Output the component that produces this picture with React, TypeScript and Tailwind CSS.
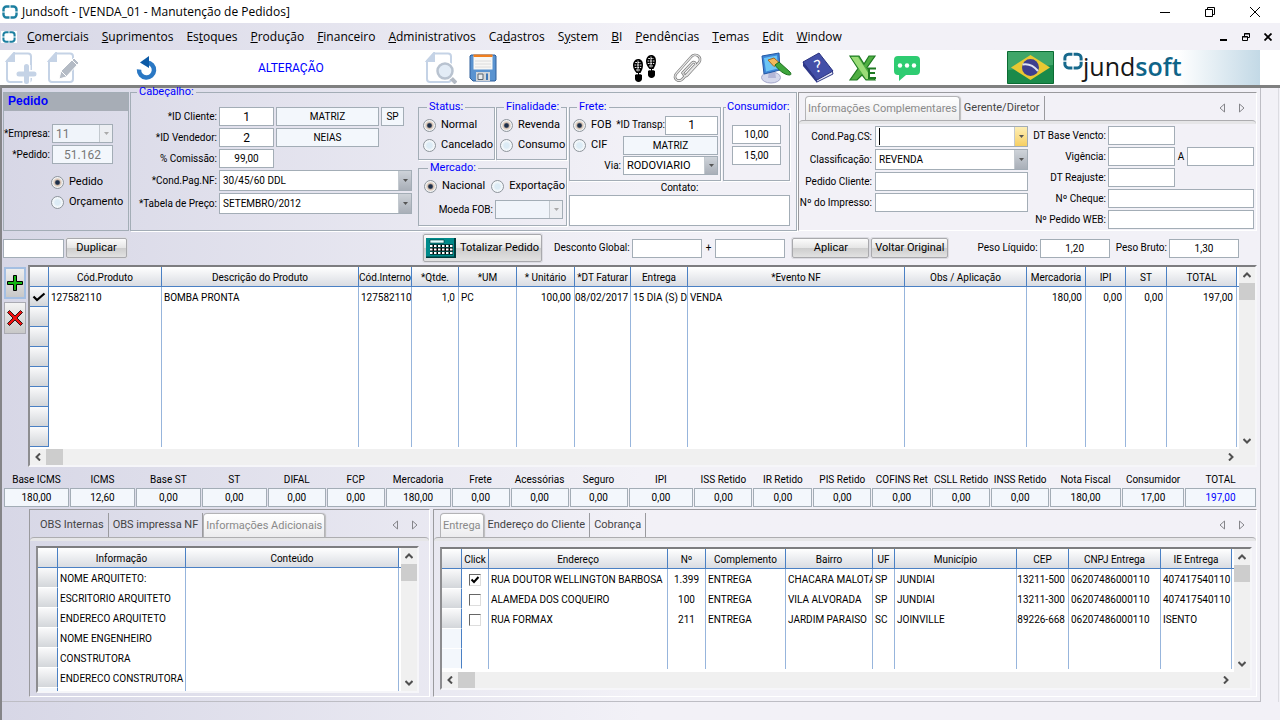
import type { ReactNode } from 'react';
import clsx from 'clsx';

const BORDER = 'border border-[#a3adb6]';

const menus = [
  ['', 'C', 'omerciais'],
  ['', 'S', 'uprimentos'],
  ['Es', 't', 'oques'],
  ['', 'P', 'rodução'],
  ['', 'F', 'inanceiro'],
  ['', 'A', 'dministrativos'],
  ['Ca', 'd', 'astros'],
  ['S', 'y', 'stem'],
  ['', 'B', 'I'],
  ['', 'P', 'endências'],
  ['', 'T', 'emas'],
  ['', 'E', 'dit'],
  ['', 'W', 'indow'],
];

const totals = [
  ['Base ICMS', '180,00'],
  ['ICMS', '12,60'],
  ['Base ST', '0,00'],
  ['ST', '0,00'],
  ['DIFAL', '0,00'],
  ['FCP', '0,00'],
  ['Mercadoria', '180,00'],
  ['Frete', '0,00'],
  ['Acessórias', '0,00'],
  ['Seguro', '0,00'],
  ['IPI', '0,00'],
  ['ISS Retido', '0,00'],
  ['IR Retido', '0,00'],
  ['PIS Retido', '0,00'],
  ['COFINS Ret', '0,00'],
  ['CSLL Retido', '0,00'],
  ['INSS Retido', '0,00'],
  ['Nota Fiscal', '180,00'],
  ['Consumidor', '17,00'],
  ['TOTAL', '197,00'],
];

type Column = { title: string; width?: string; align?: string };

const productColumns: Column[] = [
  { title: 'Cód.Produto', width: 'w-[113px]' },
  { title: 'Descrição do Produto', width: 'w-[197px]' },
  { title: 'Cód.Interno', width: 'w-[53px]' },
  { title: '*Qtde.', width: 'w-[47px]', align: 'text-right' },
  { title: '*UM', width: 'w-[58px]' },
  { title: '* Unitário', width: 'w-[58px]', align: 'text-right' },
  { title: '*DT Faturar', width: 'w-[56px]', align: 'text-right' },
  { title: 'Entrega', width: 'w-[57px]' },
  { title: '*Evento NF' },
  { title: 'Obs / Aplicação', width: 'w-[122px]' },
  { title: 'Mercadoria', width: 'w-[59px]', align: 'text-right' },
  { title: 'IPI', width: 'w-[40px]', align: 'text-right' },
  { title: 'ST', width: 'w-[41px]', align: 'text-right' },
  { title: 'TOTAL', width: 'w-[70px]', align: 'text-right' },
];

const productRows: ReactNode[][] = [
  ['127582110', 'BOMBA PRONTA', '127582110', '1,0', 'PC', '100,00', '08/02/2017', '15 DIA (S) D', 'VENDA', '', '180,00', '0,00', '0,00', '197,00'],
];

const infoColumns: Column[] = [{ title: 'Informação', width: 'w-[128px]' }, { title: 'Conteúdo' }];

const infoRows: ReactNode[][] = [
  ['NOME ARQUITETO:', ''],
  ['ESCRITORIO ARQUITETO', ''],
  ['ENDERECO ARQUITETO', ''],
  ['NOME ENGENHEIRO', ''],
  ['CONSTRUTORA', ''],
  ['ENDERECO CONSTRUTORA', ''],
];

const addressColumns: Column[] = [
  { title: 'Click', width: 'w-[27px]', align: 'text-center' },
  { title: 'Endereço', width: 'w-[179px]' },
  { title: 'Nº', width: 'w-[38px]', align: 'text-center' },
  { title: 'Complemento', width: 'w-[80px]' },
  { title: 'Bairro', width: 'w-[87px]' },
  { title: 'UF', width: 'w-[22px]' },
  { title: 'Município' },
  { title: 'CEP', width: 'w-[52px]', align: 'text-right' },
  { title: 'CNPJ Entrega', width: 'w-[92px]' },
  { title: 'IE Entrega', width: 'w-[71px]' },
];

const addressRows: ReactNode[][] = [
  [<Tick key="t" label="RUA DOUTOR WELLINGTON BARBOSA" checked />, 'RUA DOUTOR WELLINGTON BARBOSA', '1.399', 'ENTREGA', 'CHACARA MALOTA', 'SP', 'JUNDIAI', '13211-500', '06207486000110', '407417540110'],
  [<Tick key="t" label="ALAMEDA DOS COQUEIRO" />, 'ALAMEDA DOS COQUEIRO', '100', 'ENTREGA', 'VILA ALVORADA', 'SP', 'JUNDIAI', '13211-300', '06207486000110', '407417540110'],
  [<Tick key="t" label="RUA FORMAX" />, 'RUA FORMAX', '211', 'ENTREGA', 'JARDIM PARAISO', 'SC', 'JOINVILLE', '89226-668', '06207486000110', 'ISENTO'],
];

function Tick({ label, checked }: { label: string; checked?: boolean }) {
  return (
    <span className="relative inline-block size-3 align-middle">
      <input
        type="checkbox"
        aria-label={label}
        defaultChecked={checked}
        className="peer block size-3 appearance-none border border-t-[#666] border-l-[#666] border-r-[#ddd] border-b-[#ddd] bg-white"
      />
      <svg viewBox="0 0 12 12" className="pointer-events-none absolute inset-0 hidden size-3 peer-checked:block" fill="none" stroke="#000" strokeWidth="2">
        <path d="M2.500 5.500 5 8l4.500-5" />
      </svg>
    </span>
  );
}

function Box({ id, value = '', className, label, readOnly }: { id?: string; value?: string; className?: string; label?: string; readOnly?: boolean }) {
  return (
    <input
      id={id}
      aria-label={label}
      defaultValue={value}
      readOnly={readOnly}
      className={clsx('h-[19px] min-w-0 px-1 text-center outline-none', BORDER, readOnly ? 'bg-[#f3f7fc]' : 'bg-white', className)}
    />
  );
}

function Combo({ id, value = '', className, state = 'normal' }: { id: string; value?: string; className?: string; state?: 'normal' | 'focus' | 'disabled' }) {
  const face = {
    normal: 'bg-linear-to-b from-[#ced3d9] to-[#a9afb8]',
    focus: 'bg-linear-to-b from-[#fdeeb4] to-[#f6cf62]',
    disabled: 'bg-[#eceef2]',
  }[state];
  return (
    <span className={clsx('flex h-[21px] items-stretch', BORDER, state === 'disabled' ? 'bg-[#f0f4fa]' : 'bg-white', className)}>
      {state === 'focus' && <span className="my-px ml-[3px] w-px bg-black" />}
      <select id={id} disabled={state === 'disabled'} className="min-w-0 flex-1 appearance-none bg-transparent pl-[3px] outline-none disabled:text-[#777]">
        <option>{value}</option>
      </select>
      <span className={clsx('flex w-[13px] shrink-0 items-center justify-center border-l border-[#c3c9cf]', face)}>
        <svg viewBox="0 0 5 3" className="h-[3px] w-[5px]">
          <path d="M0 0h5L2.500 3z" fill={state === 'disabled' ? '#aaa' : '#555'} />
        </svg>
      </span>
    </span>
  );
}

function Radio({ name, label, checked }: { name: string; label: string; checked?: boolean }) {
  return (
    <label className="flex h-5 items-center gap-[5px] text-[11px] whitespace-nowrap">
      <input
        type="radio"
        name={name}
        defaultChecked={checked}
        className="size-[13px] shrink-0 appearance-none rounded-full border border-[#8e959c] bg-[radial-gradient(circle,#dcebf5_30%,#f4f8fb_60%)] checked:bg-[radial-gradient(circle,#1d2f4a_22%,#d9c4b3_40%,#f2f4f6_65%)]"
      />
      {label}
    </label>
  );
}

function Group({ title, className, children }: { title: string; className?: string; children: ReactNode }) {
  return (
    <fieldset className={clsx('min-w-0 shadow-[1px_1px_0_#fff]', BORDER, className)}>
      <legend className="ml-1 px-0.5 text-[11px] leading-3 text-[#0000ff]">{title}</legend>
      {children}
    </fieldset>
  );
}

function Push({ children, className }: { children: ReactNode; className?: string }) {
  return (
    <button
      type="button"
      className={clsx(
        'flex shrink-0 items-center justify-center rounded-xs border border-[#a9a9ad] bg-[linear-gradient(#fbfbfb_0%,#e6e6e6_48%,#cdcdcd_52%,#e2e2e2_100%)] text-[11px] whitespace-nowrap shadow-[0_0_0_1px_#dcdce2]',
        className,
      )}
    >
      {children}
    </button>
  );
}

function TabBar({ tabs, active }: { tabs: string[]; active: number }) {
  return (
    <div>
      <div className="flex items-end pt-[3px] pl-1.5" role="tablist">
        {tabs.map((tab, i) => (
          <button
            key={tab}
            type="button"
            role="tab"
            aria-selected={i === active}
            className={clsx(
              'h-6 text-[11px] whitespace-nowrap',
              i === active
                ? 'rounded-t-sm border border-b-0 border-[#b3b3b6] bg-linear-to-b from-white to-[#ececee] px-0.5 text-[#8a8a8a] shadow-[1px_0_1px_#bbb]'
                : 'border-r border-[#9a9a9e] px-1 text-[#444]',
            )}
          >
            {tab}
          </button>
        ))}
        <span className="mr-2.5 ml-auto flex h-6 items-center gap-3">
          <button type="button" aria-label="Aba anterior">
            <svg viewBox="0 0 8 10" className="h-2.5 w-2" fill="none" stroke="#85858a">
              <path d="M6.500 1v8L2 5z" />
            </svg>
          </button>
          <button type="button" aria-label="Próxima aba">
            <svg viewBox="0 0 8 10" className="h-2.5 w-2" fill="none" stroke="#85858a">
              <path d="M1.500 1v8L6 5z" />
            </svg>
          </button>
        </span>
      </div>
      <div className="h-1 rounded-t-sm border-t border-[#adadb0] bg-[#e6e6e8]" />
    </div>
  );
}

function Chevron({ d, label }: { d: string; label: string }) {
  return (
    <button type="button" aria-label={label} className="flex size-4 shrink-0 items-center justify-center">
      <svg viewBox="0 0 8 8" className="size-2" fill="none" stroke="#505050" strokeWidth="2">
        <path d={d} />
      </svg>
    </button>
  );
}

function Grid({ columns, rows, blank = 0, current, stub, height, horizontal }: {
  columns: Column[];
  rows: ReactNode[][];
  blank?: number;
  current?: number;
  stub: { width: string; line: string; all?: boolean };
  height: string;
  horizontal?: boolean;
}) {
  const all = [...rows, ...Array.from({ length: blank }, () => columns.map(() => '' as ReactNode))];
  return (
    <div className="border-2 border-t-[#7d7d80] border-r-[#f6f6f9] border-b-[#f6f6f9] border-l-[#8d8d90] bg-white">
      <div className="flex">
        <div className={clsx('min-w-0 flex-1 overflow-hidden', height)}>
          <table className="w-full table-fixed border-separate border-spacing-0">
            <colgroup>
              <col className={stub.width} />
              {columns.map((c) => (
                <col key={c.title} className={c.width} />
              ))}
              <col className="w-0.5" />
            </colgroup>
            <thead>
              <tr className="h-5">
                <th className="border-r border-b border-[#4a80c4] bg-linear-to-b from-white to-[#d9dce2] p-0" />
                {columns.map((c) => (
                  <th key={c.title} className="overflow-hidden border-r border-b border-[#4a80c4] bg-linear-to-b from-white to-[#d9dce2] p-0 pt-0.5 font-normal whitespace-nowrap">
                    {c.title}
                  </th>
                ))}
                <th className="border-b border-[#4a80c4] p-0" />
              </tr>
            </thead>
            <tbody>
              {all.map((row, r) => (
                <tr key={r} className="h-5">
                  <td
                    className={clsx(
                      'border-r border-b border-r-[#4a80c4] p-0',
                      stub.line,
                      stub.all || r < rows.length ? 'bg-linear-to-b from-[#fafafb] to-[#d3d6da]' : 'bg-[#f3f7fc]',
                    )}
                  >
                    {r === current && (
                      <svg viewBox="0 0 14 10" className="mx-auto h-2.5 w-3.5" fill="none" stroke="#000" strokeWidth="2.200">
                        <path d="M1.500 4.500 5 8l7.500-6.500" />
                      </svg>
                    )}
                  </td>
                  {row.map((cell, c) => (
                    <td
                      key={c}
                      className={clsx(
                        'overflow-hidden border-r border-[#97b5dc] pt-0.5 whitespace-nowrap',
                        columns[c].align ?? 'pl-0.5',
                        columns[c].align === 'text-right' && 'pr-[3px]',
                      )}
                    >
                      {cell}
                    </td>
                  ))}
                  <td className="p-0" />
                </tr>
              ))}
            </tbody>
          </table>
        </div>
        <div className="flex w-4 shrink-0 flex-col bg-[#f0f0f0]">
          <Chevron label="Rolar para cima" d="M.500 6 4 2.500 7.500 6" />
          <div className="h-[17px] bg-[#cdcdcd]" />
          <div className="mt-auto">
            <Chevron label="Rolar para baixo" d="M.500 2 4 5.500 7.500 2" />
          </div>
        </div>
      </div>
      {horizontal && (
        <div className="flex h-4 bg-[#f0f0f0]">
          <Chevron label="Rolar para a esquerda" d="M6 .500 2.500 4 6 7.500" />
          <div className="w-[17px] bg-[#cdcdcd]" />
          <div className="mr-4 ml-auto">
            <Chevron label="Rolar para a direita" d="M2 .500 5.500 4 2 7.500" />
          </div>
        </div>
      )}
    </div>
  );
}

function Mark({ className, color = '#1c7fa0' }: { className?: string; color?: string }) {
  return (
    <svg viewBox="0 0 16 14" className={className} fill="none" stroke={color} strokeWidth="2.400">
      <path d="M7.500 1.500H4.500a3 3 0 0 0-3 3v2M8.500 1.500h3a3 3 0 0 1 3 3v2M7.500 12.500H4.500a3 3 0 0 1-3-3v-2M8.500 12.500h3a3 3 0 0 0 3-3v-2" />
    </svg>
  );
}

function Page({ children }: { children: ReactNode }) {
  return (
    <svg viewBox="0 0 32 32" className="size-8">
      <path d="M9 1.500h14a3 3 0 0 1 3 3V27a3 3 0 0 1-3 3H5a3 3 0 0 1-3-3V9z" fill="#fff" stroke="#c5d3e6" strokeWidth="2" />
      <path d="M9 1v8H2z" fill="#c5d3e6" stroke="#c5d3e6" strokeWidth="2" />
      {children}
    </svg>
  );
}

function ToolButton({ label, className, children }: { label: string; className?: string; children: ReactNode }) {
  return (
    <button type="button" aria-label={label} className={clsx('shrink-0', className)}>
      {children}
    </button>
  );
}

function Foot({ x, y }: { x: number; y: number }) {
  return (
    <g transform={`translate(${x} ${y})`}>
      <path d="M5 0c3.500 0 5 2.500 5 6 0 3-1 5.500-2.500 8h-4C2 12 0 9.500 0 6.500 0 3 2 0 5 0z" fill="#000" />
      <path d="M5 1.500v11" stroke="#fff" strokeWidth=".8" />
      <path d="M2.200 3.500h5.600M1.500 6h7M1.800 8.500h6.400M3 11h4" stroke="#fff" strokeWidth=".9" strokeDasharray="1.800 .8" />
      <path d="M2 16c1-1 1.500-1 3-.500 2.500-.700 3 0 4 .500v4c0 1.500-1.500 3-3.500 3S2 21.500 2 20z" fill="#000" />
      <path d="M5.500 13v3" stroke="#000" />
    </g>
  );
}

function Toolbar() {
  return (
    <div className="flex h-[35px] items-center bg-white pl-[5px]">
      <div className="flex w-[420px] shrink-0 items-center">
        <ToolButton label="Novo">
          <Page>
            <path d="M21.500 13v19M13 22h19" stroke="#fff" strokeWidth="8" />
            <path d="M21.500 14.500v15M14 22h15" stroke="#c5d3e6" strokeWidth="5" strokeLinecap="round" />
          </Page>
        </ToolButton>
        <ToolButton label="Editar" className="ml-2.5">
          <Page>
            <path d="m12 27 2-8L27 6l5 5-13 14z" fill="#b4bbc5" stroke="#fff" />
            <path d="m25 8 5 5M14 19l5 5" stroke="#fff" />
          </Page>
        </ToolButton>
        <ToolButton label="Desfazer" className="ml-[56px]">
          <svg viewBox="0 0 24 24" className="size-6">
            <path d="M12 6.500a7.500 7.500 0 1 1-8 7" fill="none" stroke="#2a78c4" strokeWidth="4.500" />
            <path d="M14 0v12L5 6.500z" fill="#0c5aa6" />
          </svg>
        </ToolButton>
        <output className="ml-[99px] text-[12px] text-[#0000ff]">ALTERAÇÃO</output>
      </div>
      <ToolButton label="Pesquisar">
        <Page>
          <path d="m25 25 6 6" stroke="#b4bbc5" strokeWidth="4" />
          <circle cx="20" cy="19" r="7.500" fill="#dde7f2" stroke="#fff" strokeWidth="5" />
          <circle cx="20" cy="19" r="7.500" fill="#e3ecf6" stroke="#b9c3d0" strokeWidth="2.500" />
        </Page>
      </ToolButton>
      <ToolButton label="Salvar" className="ml-3">
        <svg viewBox="0 0 28 28" className="size-7">
          <path d="M2 1h24l1 1v24l-1 1H4l-3-3V2z" fill="#5a93d0" stroke="#2f5f9b" />
          <path d="M4.500 1.500h19v14h-19z" fill="#f7f7f5" />
          <path d="M4.500.500h19V3h-19z" fill="#f07f1e" />
          <path d="M6 7h16M6 10h16M6 13h16" stroke="#dcdcdc" />
          <path d="M7 18h14v9H7z" fill="#d2d6da" />
          <path d="M9 20h5v5.500H9z" fill="#e9edf0" stroke="#5c6670" />
          <path d="M17 19.500h2V26h-2z" fill="#3f78b8" />
        </svg>
      </ToolButton>
      <ToolButton label="Rastrear" className="ml-[135px]">
        <svg viewBox="0 0 26 30" className="h-[30px] w-[26px]">
          <Foot x={1} y={6} />
          <Foot x={14} y={2} />
        </svg>
      </ToolButton>
      <ToolButton label="Anexos" className="ml-3">
        <svg viewBox="0 0 34 32" className="h-8 w-[34px]" fill="none" strokeLinecap="round">
          <path d="M12.500 21 22 11c2-2 4.500 0 3 2.300L12.500 27c-4 4-10-.500-6.500-5L21 5c4-5 12 0 8 5.500L17 23.500c-2 1.500-4-.500-3-2" stroke="#777" strokeWidth="2.600" />
          <path d="M12.500 21 22 11c2-2 4.500 0 3 2.300L12.500 27c-4 4-10-.500-6.500-5L21 5c4-5 12 0 8 5.500L17 23.500c-2 1.500-4-.500-3-2" stroke="#e6e6e6" strokeWidth="1.200" />
        </svg>
      </ToolButton>
      <ToolButton label="Aparência" className="ml-[56px]">
        <svg viewBox="0 0 32 32" className="size-8">
          <ellipse cx="11" cy="25.500" rx="9.500" ry="5.500" fill="#d5d8ec" stroke="#a5a8cb" />
          <path d="M9 19h6l1 7H8z" fill="#b3b6d6" />
          <path d="m2 4 17-3 1 17-16 4z" fill="#3d86d8" stroke="#2458a4" />
          <path d="m4 6 13-2.500 1 13L6 19.500z" fill="#6dc6f5" />
          <path d="m8 8 6-2 5 4.500-5 4z" fill="#f2b95a" stroke="#a86a20" />
          <path d="m15 13 4-3 11 10c1.500 2 1 3-.500 3-5 0-11-5-14.500-10z" fill="#3ea63c" stroke="#1b6e1d" />
        </svg>
      </ToolButton>
      <ToolButton label="Ajuda" className="ml-2.5">
        <svg viewBox="0 0 32 32" className="size-8">
          <path d="m1 10 2 3 12 17 16-8-1-4z" fill="#e6e8f5" stroke="#323a86" />
          <path d="M1 10 17 1l14 18-16 9z" fill="#434fa8" stroke="#2b3380" />
          <path d="M1 10v4l14 17v-3z" fill="#2d3789" />
          <text x="16" y="20" fontSize="17" fontFamily="Lato, sans-serif" fill="#fff" textAnchor="middle" transform="rotate(-12 16 15)">
            ?
          </text>
        </svg>
      </ToolButton>
      <ToolButton label="Exportar Excel" className="ml-3.5">
        <svg viewBox="0 0 30 28" className="h-7 w-[30px]">
          <path d="M2 2h9l5 8 5-8h6L19 13.500l5 7 3 5.500H18l-4-5-5 5H2l8-11.500z" fill="#4fae42" stroke="#1f7a22" strokeWidth="1.200" />
          <path d="M3 3h7l14 22h-6z" fill="#9bdc78" />
          <path d="M20 14h8v10h-8z" fill="#fff" />
          <path d="M20 14.500h8M20 19h7M20 24h8M21 14v10" stroke="#1f7a22" strokeWidth="2" />
        </svg>
      </ToolButton>
      <ToolButton label="Mensagens" className="ml-4">
        <svg viewBox="0 0 26 26" className="size-[26px]">
          <path d="M4 1h18a4 4 0 0 1 4 4v11a4 4 0 0 1-4 4H12l-7 6v-6H4a4 4 0 0 1-4-4V5a4 4 0 0 1 4-4z" fill="#2ecc71" />
          <circle cx="6" cy="10.500" r="2.200" fill="#fff" />
          <circle cx="13" cy="10.500" r="2.200" fill="#fff" />
          <circle cx="20" cy="10.500" r="2.200" fill="#fff" />
        </svg>
      </ToolButton>
      <div className="mr-5 ml-auto flex h-full items-center">
        <svg viewBox="0 0 47 33" className="h-[33px] w-[47px]">
          <path d="M.500.500h46v32H.500z" fill="#1a8a4a" stroke="#0b6b33" />
          <path d="M1 1h45v13L1 19z" fill="#3fa668" />
          <path d="M23.500 4 43 16.500 23.500 29 4 16.500z" fill="#e9c832" />
          <circle cx="23.500" cy="16.500" r="8.500" fill="#3e3f8e" />
          <path d="M15.500 13.500c5-1 11 1 15.500 6.500" stroke="#dfe3f2" strokeWidth="2" fill="none" />
        </svg>
        <div className="flex h-full w-[206px] bg-linear-to-r from-white from-60% to-[#c3d9e6] pl-[9px]">
          <Mark className="mt-0.5 h-[18px] w-5" color="#17698c" />
          <span className="font-['Open_Sans',sans-serif] text-[25px] leading-[33px] text-[#161616]">
            jund<span className="font-semibold text-[#0f6488]">soft</span>
          </span>
        </div>
      </div>
    </div>
  );
}

function OrderPanel() {
  return (
    <section className={clsx('mt-1 w-[126px] shrink-0', BORDER)}>
      <h2 className="h-[18px] bg-[#a7adb6] pl-1 font-['Liberation_Sans',sans-serif] text-[12px] leading-[17px] font-bold text-[#0000ff]">Pedido</h2>
      <div className="mt-[13px] grid grid-cols-[1fr_61px] items-center gap-x-0.5 gap-y-[2px] pr-[15px] text-right">
        <label htmlFor="empresa">*Empresa:</label>
        <Combo id="empresa" value="11" state="disabled" className="h-[19px]! text-[12px]" />
        <label htmlFor="pedido">*Pedido:</label>
        <Box id="pedido" value="51.162" readOnly className="text-[12px] text-[#777]" />
      </div>
      <div className="mt-2 ml-[47px]">
        <Radio name="tipo" label="Pedido" checked />
        <Radio name="tipo" label="Orçamento" />
      </div>
    </section>
  );
}

function HeaderPanel() {
  return (
    <fieldset className={clsx('w-[667px] shrink-0 shadow-[1px_1px_0_#fff]', BORDER)}>
      <legend className="ml-1.5 px-0.5 text-[11px] leading-2 text-[#0000ff]">Cabeçalho:</legend>
      <div className="flex">
        <div className="mt-[11px] grid w-[287px] shrink-0 grid-cols-[86px_193px] content-start items-center gap-x-0.5 gap-y-[2px]">
          <label htmlFor="cliente" className="text-right">*ID Cliente:</label>
          <div className="flex gap-0.5">
            <Box id="cliente" value="1" className="w-[55px] text-[12px]" />
            <Box label="Nome do cliente" value="MATRIZ" readOnly className="w-[103px]" />
            <Box label="UF do cliente" value="SP" readOnly className="w-[23px] px-0!" />
          </div>
          <label htmlFor="vendedor" className="text-right">*ID Vendedor:</label>
          <div className="flex gap-0.5">
            <Box id="vendedor" value="2" className="w-[55px] text-[12px]" />
            <Box label="Nome do vendedor" value="NEIAS" readOnly className="w-[103px]" />
          </div>
          <label htmlFor="comissao" className="text-right">% Comissão:</label>
          <Box id="comissao" value="99,00" className="w-[55px]" />
          <label htmlFor="cond" className="text-right">*Cond.Pag.NF:</label>
          <Combo id="cond" value="30/45/60 DDL" />
          <label htmlFor="tabela" className="text-right whitespace-nowrap">*Tabela de Preço:</label>
          <Combo id="tabela" value="SETEMBRO/2012" />
        </div>
        <div className="mt-[5px] w-[149px] shrink-0">
          <div className="flex gap-px">
            <Group title="Status:" className="w-[77px] pt-0.5 pb-1 pl-1">
              <Radio name="status" label="Normal" checked />
              <Radio name="status" label="Cancelado" />
            </Group>
            <Group title="Finalidade:" className="w-[71px] pt-0.5 pb-1 pl-[3px]">
              <Radio name="finalidade" label="Revenda" checked />
              <Radio name="finalidade" label="Consumo" />
            </Group>
          </div>
          <Group title="Mercado:" className="mt-0.5 pt-0.5 pb-1.5 pl-[5px]">
            <div className="flex gap-1.5">
              <Radio name="mercado" label="Nacional" checked />
              <Radio name="mercado" label="Exportação" />
            </div>
            <div className="mt-1 mr-[3px] flex items-center justify-end gap-0.5">
              <label htmlFor="moeda">Moeda FOB:</label>
              <Combo id="moeda" state="disabled" className="h-[19px]! w-[68px]" />
            </div>
          </Group>
        </div>
        <div className="mt-[5px] ml-0.5 w-[221px] shrink-0">
          <div className="flex gap-0.5">
            <Group title="Frete:" className="w-[152px] pt-0.5 pr-0.5 pb-[5px] pl-[3px]">
              <div className="flex items-center justify-between">
                <Radio name="frete" label="FOB" checked />
                <div className="flex items-center">
                  <label htmlFor="transp" className="whitespace-nowrap">*ID Transp:</label>
                  <Box id="transp" value="1" className="w-[53px] text-[12px]" />
                </div>
              </div>
              <div className="flex items-center justify-between">
                <Radio name="frete" label="CIF" />
                <Box label="Transportadora" value="MATRIZ" readOnly className="w-[95px]" />
              </div>
              <div className="mt-px flex items-center justify-end gap-0.5">
                <label htmlFor="via">Via:</label>
                <Combo id="via" value="RODOVIARIO" className="h-[19px]! w-[95px] text-[11px]" />
              </div>
            </Group>
            <Group title="Consumidor:" className="w-[67px] [&>legend]:ml-0.5 [&>legend]:px-px">
              <div className="mt-3 flex flex-col items-center gap-0.5">
                <Box label="Consumidor 1" value="10,00" className="w-[49px]" />
                <Box label="Consumidor 2" value="15,00" className="w-[49px]" />
              </div>
            </Group>
          </div>
          <label htmlFor="contato" className="block text-center leading-[14px]">Contato:</label>
          <textarea id="contato" className={clsx('mb-1 block h-[31px] w-full resize-none bg-white', BORDER)} />
        </div>
      </div>
    </fieldset>
  );
}

function ExtraPanel() {
  return (
    <section className="mt-1 min-w-0 flex-1 border border-[#9a9a9e] border-r-white border-b-white">
      <TabBar tabs={['Informações Complementares', 'Gerente/Diretor']} active={0} />
      <div className="flex justify-between pt-0.5 pr-0.5">
        <div className="grid grid-cols-[73px_153px] content-start items-center gap-x-[3px] gap-y-[2px] text-right whitespace-nowrap">
          <label htmlFor="condcs">Cond.Pag.CS:</label>
          <Combo id="condcs" state="focus" />
          <label htmlFor="classe">Classificação:</label>
          <Combo id="classe" value="REVENDA" />
          <label htmlFor="pedcliente">Pedido Cliente:</label>
          <Box id="pedcliente" />
          <label htmlFor="impresso">Nº do Impresso:</label>
          <Box id="impresso" />
        </div>
        <div className="grid grid-cols-[auto_146px] content-start items-center gap-x-0.5 gap-y-[2px] text-right whitespace-nowrap">
          <label htmlFor="dtbase">DT Base Vencto:</label>
          <Box id="dtbase" className="w-[67px]" />
          <label htmlFor="vigencia">Vigência:</label>
          <div className="flex items-center justify-between">
            <Box id="vigencia" className="w-[67px]" />
            <label htmlFor="vigenciafim">A</label>
            <Box id="vigenciafim" className="w-[67px]" />
          </div>
          <label htmlFor="reajuste">DT Reajuste:</label>
          <Box id="reajuste" className="w-[67px]" />
          <label htmlFor="cheque">Nº Cheque:</label>
          <Box id="cheque" />
          <label htmlFor="web">Nº Pedido WEB:</label>
          <Box id="web" />
        </div>
      </div>
    </section>
  );
}

function ActionRow() {
  return (
    <div className="flex h-[34px] items-center whitespace-nowrap">
      <div className="flex w-[420px] shrink-0 items-center gap-0.5">
        <Box label="Número para duplicar" className="w-[61px]" />
        <Push className="h-5 w-[61px]">Duplicar</Push>
      </div>
      <Push className="h-7 w-[119px] gap-1">
        <svg viewBox="0 0 30 20" className="h-5 w-[30px]">
          <path d="M0 0h30v20H0z" fill="#003c3c" />
          <path d="M0 0h28v18.500H0z" fill="#008a8a" />
          <path d="M4 2h14v3H4z" fill="#dff" stroke="#033" strokeWidth=".6" />
          <path d="M4 8h23M4 11.500h23M4 15h23" stroke="#000" strokeWidth="3" />
          <path d="M4 8h23M4 11.500h23M4 15h23" stroke="#fff" strokeWidth="2" strokeDasharray="2.500 1.500" />
        </svg>
        Totalizar Pedido
      </Push>
      <div className="ml-3 flex items-center gap-0.5">
        <label htmlFor="desconto">Desconto Global:</label>
        <Box id="desconto" className="w-[70px]" />
        <span className="px-0.5">+</span>
        <Box label="Desconto adicional" className="w-[70px]" />
      </div>
      <Push className="ml-[7px] h-5 w-[77px]">Aplicar</Push>
      <Push className="ml-0.5 h-5 w-[77px]">Voltar Original</Push>
      <div className="mr-[18px] ml-auto flex items-center gap-0.5">
        <label htmlFor="liquido">Peso Líquido:</label>
        <Box id="liquido" value="1,20" className="w-[70px]" />
        <label htmlFor="bruto" className="ml-1">Peso Bruto:</label>
        <Box id="bruto" value="1,30" className="w-[70px]" />
      </div>
    </div>
  );
}

function Totals() {
  return (
    <div className="mt-0.5 grid grid-cols-[66fr_66fr_66fr_66fr_59fr_59fr_66fr_59fr_59fr_59fr_66fr_59fr_60fr_59fr_60fr_59fr_59fr_72fr_63fr_72fr] pl-px">
      {totals.map(([label, value], i) => (
        <div key={label + i} className="flex min-w-0 flex-col pr-px text-center">
          <label htmlFor={`total-${i}`} className="h-[19px] leading-[22px] whitespace-nowrap">{label}</label>
          <Box id={`total-${i}`} value={value} readOnly className={clsx('w-full', label === 'TOTAL' && 'text-[#0000ff]')} />
        </div>
      ))}
    </div>
  );
}

export default function App() {
  return (
    <div className="flex min-h-screen flex-col overflow-hidden bg-white font-['Roboto','Liberation_Sans',sans-serif] text-[10px] leading-[14px] text-black">
      <header className="font-['Open_Sans','Noto_Sans',sans-serif] text-[12px]">
        <div className="flex h-[23px] items-center pl-0.5">
          <Mark className="h-3.5 w-4" />
          <h1 className="ml-1">Jundsoft - [VENDA_01 - Manutenção de Pedidos]</h1>
          <div className="mr-5 ml-auto flex items-center gap-[35px]">
            <button type="button" aria-label="Minimizar">
              <svg viewBox="0 0 10 10" className="size-2.5" stroke="#000"><path d="M0 5.500h10" /></svg>
            </button>
            <button type="button" aria-label="Restaurar">
              <svg viewBox="0 0 10 10" className="size-2.5" fill="none" stroke="#000"><path d="M.500 2.500h7v7h-7zM2.500 2.500v-2h7v7h-2" /></svg>
            </button>
            <button type="button" aria-label="Fechar">
              <svg viewBox="0 0 10 10" className="size-2.5" stroke="#000"><path d="m0 0 10 10M10 0 0 10" /></svg>
            </button>
          </div>
        </div>
        <nav className="flex h-[27px] items-center bg-linear-to-r from-[#d7d7e6] to-[#f2f1f7] to-50% pl-px">
          <span className="bg-white px-px"><Mark className="h-3 w-3.5" /></span>
          <div className="ml-2.5 flex gap-[13px]">
            {menus.map(([before, key, after]) => (
              <button type="button" key={before + key + after}>
                {before}
                <u>{key}</u>
                {after}
              </button>
            ))}
          </div>
          <div className="mr-2 ml-auto flex items-center gap-3.5">
            <button type="button" aria-label="Minimizar janela">
              <svg viewBox="0 0 8 8" className="size-2" stroke="#000" strokeWidth="2"><path d="M0 7h7" /></svg>
            </button>
            <button type="button" aria-label="Restaurar janela">
              <svg viewBox="0 0 8 8" className="size-2" fill="none" stroke="#000"><path d="M.500 3.500h5v4h-5zM0 4h6M2.500 3V.500h5v4H6M2 1h6" /></svg>
            </button>
            <button type="button" aria-label="Fechar janela">
              <svg viewBox="0 0 8 8" className="size-2" stroke="#000" strokeWidth="1.800"><path d="m.500.500 7 7M7.500.500l-7 7" /></svg>
            </button>
          </div>
        </nav>
      </header>
      <Toolbar />
      <main className="flex-1 border-t-[3px] border-l-2 border-t-[#7f8080] border-l-[#858588] bg-linear-to-r from-[#d7d7e6] to-[#f2f1f7] to-50%">
        <div className="mr-px border-r border-[#dcdce2]">
          <div className="mr-[17px] border-r border-b border-[#bdbdc4] pr-[3px] pb-1 pl-px">
            <div className="flex gap-px">
              <OrderPanel />
              <HeaderPanel />
              <ExtraPanel />
            </div>
            <ActionRow />
            <div className="flex gap-px">
              <div className="flex w-6 shrink-0 flex-col items-center gap-[3px] pt-0.5">
                <button type="button" aria-label="Adicionar item" className="flex h-8 w-[22px] items-center justify-center border-2 border-[#a4bfe2] bg-linear-to-b from-[#eee] to-[#c8c8c8]">
                  <svg viewBox="0 0 16 16" className="size-4"><path d="M6.500.500h3v6h6v3h-6v6h-3v-6h-6v-3h6z" fill="#12b812" stroke="#000" /></svg>
                </button>
                <button type="button" aria-label="Remover item" className="flex h-8 w-[22px] items-center justify-center border border-[#aaaab2] bg-linear-to-b from-[#f4f4f4] to-[#c8c8c8]">
                  <svg viewBox="0 0 16 16" className="size-4"><path d="m2.500.500 5.500 5.500 5.500-5.500 2 2L10 8l5.500 5.500-2 2L8 10l-5.500 5.500-2-2L6 8 .500 2.500z" fill="#f01010" stroke="#000" strokeWidth=".8" /></svg>
                </button>
              </div>
              <div className="min-w-0 flex-1">
                <Grid columns={productColumns} rows={productRows} blank={7} current={0} stub={{ width: 'w-[19px]', line: 'border-b-[#4a80c4]', all: true }} height="h-[182px]" horizontal />
              </div>
            </div>
            <Totals />
            <div className="mt-0.5 ml-[26px] flex gap-[3px]">
              <section className="w-[401px] shrink-0 border border-[#9a9a9e] border-r-white border-b-white">
                <TabBar tabs={['OBS Internas', 'OBS impressa NF', 'Informações Adicionais']} active={2} />
                <div className="pt-[5px] pr-2.5 pb-[3px] pl-1.5">
                  <Grid columns={infoColumns} rows={infoRows} blank={1} stub={{ width: 'w-5', line: 'border-b-white' }} height="h-[143px]" />
                </div>
              </section>
              <section className="min-w-0 flex-1 border border-[#9a9a9e] border-r-white border-b-white">
                <TabBar tabs={['Entrega', 'Endereço do Cliente', 'Cobrança']} active={0} />
                <div className="pt-1.5 pr-1 pb-1 pl-1.5">
                  <Grid columns={addressColumns} rows={addressRows} blank={2} stub={{ width: 'w-5', line: 'border-b-white' }} height="h-[123px]" horizontal />
                </div>
              </section>
            </div>
          </div>
        </div>
      </main>
    </div>
  );
}
